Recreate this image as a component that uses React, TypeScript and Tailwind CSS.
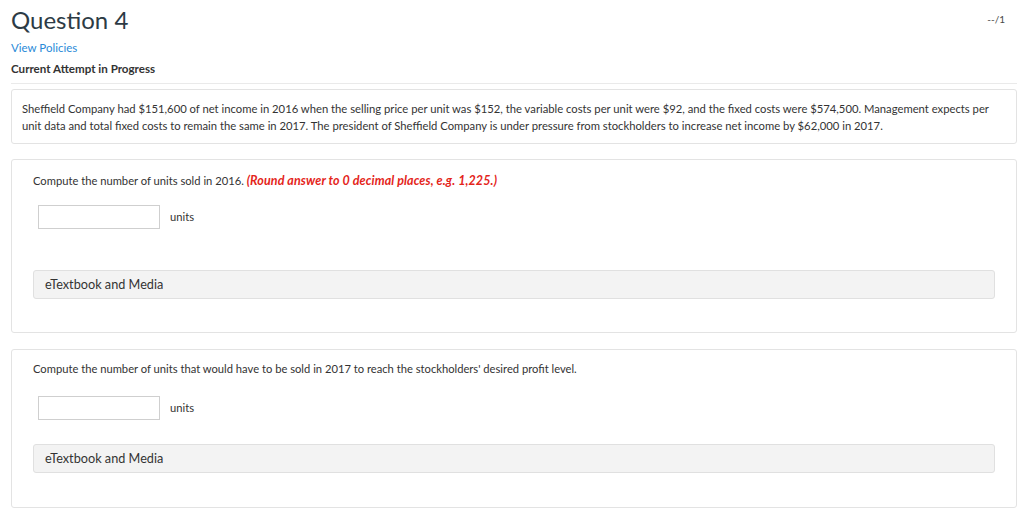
export default function App() {
  return (
    <div className="min-h-screen bg-white pl-[11px] pr-[7px] text-[#2d3b45]" style={{ fontFamily: 'Lato, "Open Sans", sans-serif' }}>
      <div className="flex items-start justify-between pt-[5px]">
        <h1 className="text-[24px] leading-[30px] font-normal text-[#2d3b45]">Question 4</h1>
        <span className="mt-[7px] mr-[12px] text-[10px] text-[#4a4a4a]">--/1</span>
      </div>
      <a className="mt-[6px] block text-[11.5px] leading-[14px] text-[#2a8ad8]">View Policies</a>
      <p className="mt-[7px] text-[11.6px] leading-[14px] font-bold text-[#333]">Current Attempt in Progress</p>
      <div className="mt-[7px] border-t border-[#eaeaea]" />

      <div className="mt-[5px] rounded-[3px] border border-[#e3e3e3] pl-[10px] pr-[20px] pt-[10px] pb-[9px] text-[11.25px] leading-[17px] text-[#333]">
        Sheffield Company had $151,600 of net income in 2016 when the selling price per unit was $152, the variable costs per unit were $92, and the fixed costs were $574,500. Management expects per unit data and total fixed costs to remain the same in 2017. The president of Sheffield Company is under pressure from stockholders to increase net income by $62,000 in 2017.
      </div>

      <div className="mt-[15px] rounded-[3px] border border-[#e3e3e3] px-[21px] pt-[13px] pb-[33px]">
        <p className="text-[11.2px] leading-[16px] text-[#333]">
          Compute the number of units sold in 2016.{' '}
          <span className="text-[12.5px] font-bold italic tracking-[0.1px] text-[#e4251b]">(Round answer to 0 decimal places, e.g. 1,225.)</span>
        </p>
        <div className="mt-[16px] flex items-center gap-[10px] pl-[5px]">
          <input className="h-[24px] w-[122px] border border-[#cfcfcf] bg-white outline-none" />
          <span className="text-[11.2px] text-[#333]">units</span>
        </div>
        <div className="mt-[41px] rounded-[3px] border border-[#e0e0e0] bg-[#f3f3f3] px-[11px] py-[6px] text-[12.7px] leading-[15px] text-[#333]">
          eTextbook and Media
        </div>
      </div>

      <div className="mt-[16px] rounded-[3px] border border-[#e3e3e3] px-[21px] pt-[11px] pb-[34px]">
        <p className="text-[11.2px] leading-[16px] text-[#333]">
          Compute the number of units that would have to be sold in 2017 to reach the stockholders' desired profit level.
        </p>
        <div className="mt-[19px] flex items-center gap-[10px] pl-[5px]">
          <input className="h-[24px] w-[122px] border border-[#cfcfcf] bg-white outline-none" />
          <span className="text-[11.2px] text-[#333]">units</span>
        </div>
        <div className="mt-[24px] rounded-[3px] border border-[#e0e0e0] bg-[#f3f3f3] px-[11px] py-[6px] text-[12.7px] leading-[15px] text-[#333]">
          eTextbook and Media
        </div>
      </div>
    </div>
  )
}
